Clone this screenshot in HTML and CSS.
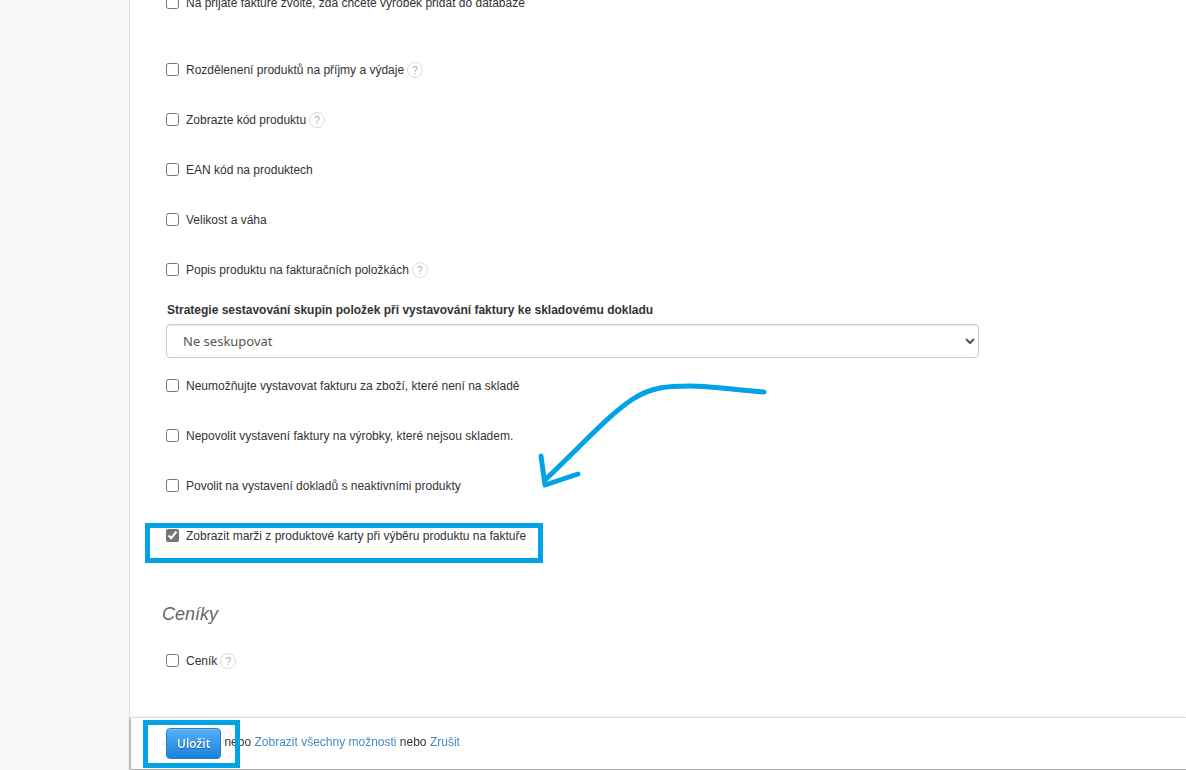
FILE: index.html
```html
<!DOCTYPE html>
<html lang="cs">
<head>
<meta charset="utf-8">
<title>Nastavení</title>
<link rel="stylesheet" href="styles.css">
</head>
<body>
<div class="page">
  <aside class="sidebar"></aside>
  <main class="content">
    <form class="settings" id="settings">
      <div class="option option-first"><label class="check"><input type="checkbox">Na přijaté faktuře zvolte, zda chcete výrobek přidat do databáze</label></div>
      <div class="option"><label class="check"><input type="checkbox">Rozdělenení produktů na příjmy a výdaje</label><span class="help">?</span></div>
      <div class="option"><label class="check"><input type="checkbox">Zobrazte kód produktu</label><span class="help">?</span></div>
      <div class="option"><label class="check"><input type="checkbox">EAN kód na produktech</label></div>
      <div class="option"><label class="check"><input type="checkbox">Velikost a váha</label></div>
      <div class="option option-tight"><label class="check"><input type="checkbox">Popis produktu na fakturačních položkách</label><span class="help">?</span></div>
      <div class="field">
        <label class="field-label" for="strategy">Strategie sestavování skupin položek při vystavování faktury ke skladovému dokladu</label>
        <select class="select" id="strategy"><option>Ne seskupovat</option></select>
      </div>
      <div class="option"><label class="check"><input type="checkbox">Neumožňujte vystavovat fakturu za zboží, které není na skladě</label></div>
      <div class="option"><label class="check"><input type="checkbox">Nepovolit vystavení faktury na výrobky, které nejsou skladem.</label></div>
      <div class="option"><label class="check"><input type="checkbox">Povolit na vystavení dokladů s neaktivními produkty</label></div>
      <div class="option"><label class="check"><input type="checkbox" checked>Zobrazit marži z produktové karty při výběru produktu na faktuře</label></div>
      <h2 class="heading">Ceníky</h2>
      <div class="option"><label class="check"><input type="checkbox">Ceník</label><span class="help">?</span></div>
      <h2 class="heading">Zákazníci</h2>
    </form>
  </main>
</div>
<footer class="actions">
  <button class="save" type="submit" form="settings">Uložit</button>
  <span class="alternatives">nebo <a href="#all">Zobrazit všechny možnosti</a> nebo <a href="#cancel">Zrušit</a></span>
</footer>
<div class="mark mark-option"></div>
<div class="mark mark-save"></div>
<svg class="arrow" width="240" height="120" viewBox="532 376 240 120" aria-hidden="true">
  <path d="M764 392C735 390 712 386 690 386C668 386 651 387 633 399C611 413 588 439 545 480M541 456L545 485L578 474"/>
</svg>
</body>
</html>
```
FILE: styles.css
```css
* {
  box-sizing: border-box;
}

body {
  margin: 0;
  height: 100vh;
  overflow: hidden;
  position: relative;
  background: #fff;
  color: #333;
  font: 12px/20px "Liberation Sans", Arial, sans-serif;
}

.page {
  display: flex;
  height: 100%;
  overflow: hidden;
}

.sidebar {
  flex: none;
  width: 129px;
  background: #f7f7f7;
}

.content {
  flex: 1;
  min-width: 0;
  border-left: 1px solid #d5dfe5;
}

.settings {
  margin-top: -7px;
  padding: 0 207px 0 36px;
}

.option {
  display: flex;
  align-items: center;
  gap: 3px;
  height: 20px;
  margin-bottom: 30px;
}

.option-first {
  margin-bottom: 47px;
}

.option-tight {
  margin-bottom: 20px;
}

.check {
  display: flex;
  align-items: center;
  gap: 7px;
}

.check input {
  width: 13px;
  height: 13px;
  margin: 0 0 1px;
  accent-color: #767676;
}

.help {
  width: 16px;
  height: 16px;
  border: 1px solid #ddd;
  border-radius: 50%;
  color: #aaa;
  font-size: 10px;
  line-height: 15px;
  text-align: center;
}

.field {
  display: flex;
  flex-direction: column;
  gap: 4px;
  margin-bottom: 18px;
}

.field-label {
  padding-left: 1px;
  font-weight: bold;
}

.select {
  width: 100%;
  height: 34px;
  padding: 0 12px;
  border: 1px solid #ccc;
  border-radius: 4px;
  background: #fff;
  box-shadow: inset 0 1px 1px rgba(0, 0, 0, 0.075);
  color: #555;
  font: 13px "Noto Sans", sans-serif;
}

.heading {
  margin: 58px 0 27px -4px;
  color: #666;
  font-size: 18px;
  font-style: italic;
  font-weight: normal;
  line-height: 20px;
}

.actions {
  position: fixed;
  right: 0;
  bottom: 0;
  left: 131px;
  display: flex;
  align-items: center;
  gap: 3px;
  height: 53px;
  padding: 0 35px;
  border-top: 1px solid #ddd;
  border-bottom: 1px solid #aaa;
  background: rgba(255, 255, 255, 0.9);
  box-shadow: -1px 1px 2px rgba(0, 0, 0, 0.4);
}

.actions a {
  color: #428bca;
  text-decoration: none;
}

.alternatives {
  padding-bottom: 4px;
}

.save {
  height: 31px;
  padding: 0 10px;
  border: 1px solid #2b7cc4;
  border-radius: 4px;
  background: linear-gradient(#55aff8, #1b82dd);
  box-shadow: inset 0 1px 0 rgba(255, 255, 255, 0.25);
  color: #fff;
  font: 600 12px "Open Sans", sans-serif;
  text-shadow: 0 1px 1px rgba(0, 0, 0, 0.4);
}

.mark {
  position: absolute;
  border: 5px solid #00a2e8;
  pointer-events: none;
}

.mark-option {
  top: 523px;
  left: 145px;
  width: 398px;
  height: 40px;
}

.mark-save {
  top: 720px;
  left: 143px;
  width: 97px;
  height: 48px;
}

.arrow {
  position: absolute;
  top: 376px;
  left: 532px;
  fill: none;
  stroke: #00a2e8;
  stroke-width: 5px;
  stroke-linecap: round;
  stroke-linejoin: round;
  pointer-events: none;
}
```
